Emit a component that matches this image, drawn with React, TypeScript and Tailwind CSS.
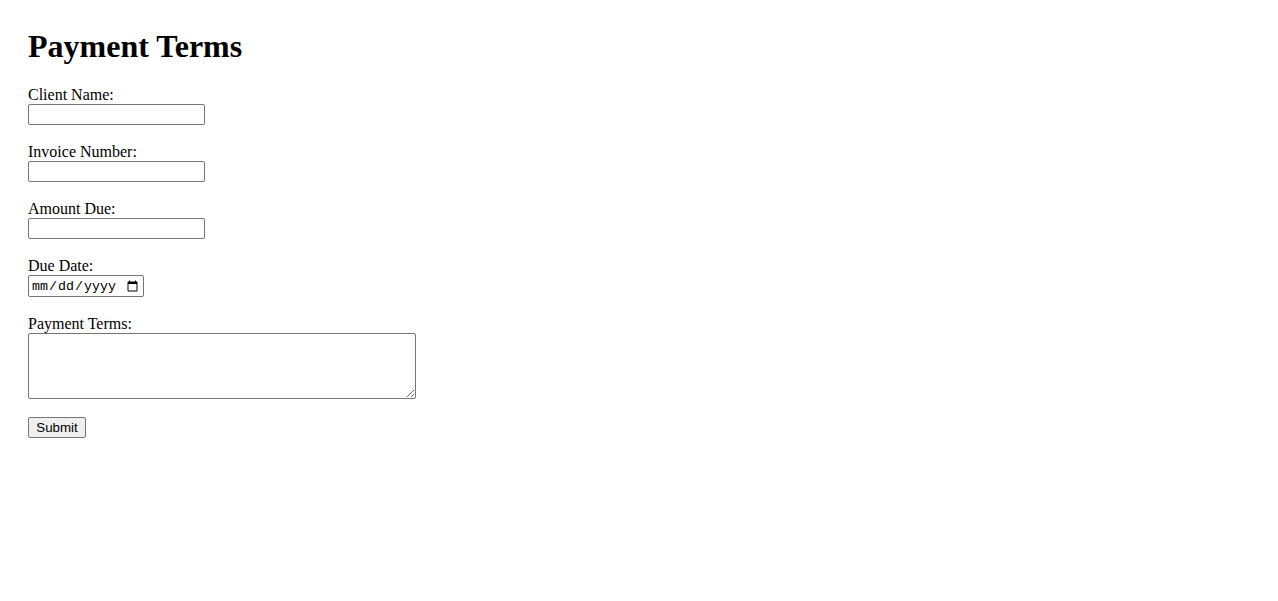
const fields = [
  { label: "Client Name:", id: "client" },
  { label: "Invoice Number:", id: "invoice" },
  { label: "Amount Due:", id: "amount" },
];

const App = () => {
  return (
    <div className="min-h-screen bg-white px-7 pt-7 text-black font-['Liberation_Serif','Times_New_Roman',serif]">
      <h1 className="text-[32px] font-bold leading-[37px] mb-[21px]">Payment Terms</h1>
      <form>
        {fields.map((f) => (
          <div key={f.id} className="mb-[18px]">
            <label htmlFor={f.id} className="block text-[16px] leading-[18px]">
              {f.label}
            </label>
            <input
              id={f.id}
              type="text"
              className="block w-[177px] h-[21px] border border-[#767676] rounded-[2px] px-[2px] text-[13.33px] bg-white"
            />
          </div>
        ))}
        <div className="mb-[18px]">
          <label htmlFor="due" className="block text-[16px] leading-[18px]">
            Due Date:
          </label>
          <input
            id="due"
            type="date"
            className="block w-[116px] h-[22px] border border-[#767676] rounded-[2px] pl-[2px] pr-[2px] pt-[2px] text-[13.33px] font-['Liberation_Mono',monospace] bg-white"
          />
        </div>
        <div className="mb-[18px]">
          <label htmlFor="terms" className="block text-[16px] leading-[18px]">
            Payment Terms:
          </label>
          <textarea
            id="terms"
            className="block w-[388px] h-[66px] border border-[#767676] rounded-[2px] p-[2px] text-[13.33px] font-['Liberation_Mono',monospace] bg-white"
          />
        </div>
        <button
          type="button"
          className="block w-[58px] h-[21px] border border-[#767676] rounded-[2px] bg-[#efefef] text-[13.33px] leading-none font-['Liberation_Sans',Arial,sans-serif]"
        >
          Submit
        </button>
      </form>
    </div>
  );
};

export default App;
